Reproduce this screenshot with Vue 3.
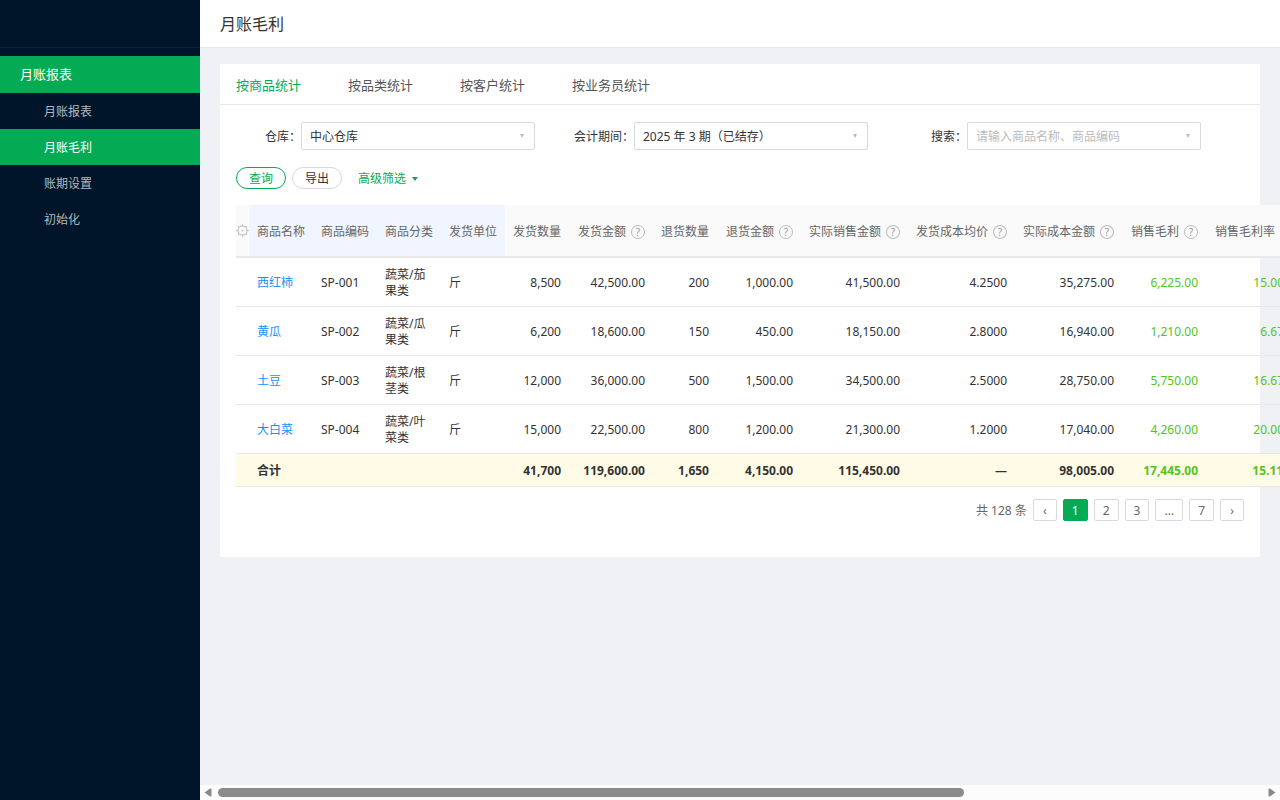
<script setup>
import { ref } from 'vue'

const menus = ['月账报表', '月账毛利', '账期设置', '初始化']
const activeMenu = ref('月账毛利')

const tabs = ['按商品统计', '按品类统计', '按客户统计', '按业务员统计']
const activeTab = ref('按商品统计')

const warehouse = ref('中心仓库')
const period = ref('2025 年 3 期（已结存）')
const keyword = ref('')

const pages = ['‹', '1', '2', '3', '...', '7', '›']
const currentPage = ref('1')

const columns = [
  { key: 'qty', title: '发货数量', size: 'num' },
  { key: 'amount', title: '发货金额', size: 'amount', help: true },
  { key: 'backQty', title: '退货数量', size: 'num' },
  { key: 'backAmount', title: '退货金额', size: 'amount', help: true },
  { key: 'sales', title: '实际销售金额', size: 'wide', help: true },
  { key: 'price', title: '发货成本均价', size: 'wide', help: true },
  { key: 'cost', title: '实际成本金额', size: 'wide', help: true },
  { key: 'profit', title: '销售毛利', size: 'amount', help: true, green: true },
  { key: 'rate', title: '销售毛利率', size: 'rate', help: true, green: true }
]

const rows = [
  { name: '西红柿', code: 'SP-001', category: '蔬菜/茄果类', unit: '斤', qty: '8,500', amount: '42,500.00', backQty: '200', backAmount: '1,000.00', sales: '41,500.00', price: '4.2500', cost: '35,275.00', profit: '6,225.00', rate: '15.00%' },
  { name: '黄瓜', code: 'SP-002', category: '蔬菜/瓜果类', unit: '斤', qty: '6,200', amount: '18,600.00', backQty: '150', backAmount: '450.00', sales: '18,150.00', price: '2.8000', cost: '16,940.00', profit: '1,210.00', rate: '6.67%' },
  { name: '土豆', code: 'SP-003', category: '蔬菜/根茎类', unit: '斤', qty: '12,000', amount: '36,000.00', backQty: '500', backAmount: '1,500.00', sales: '34,500.00', price: '2.5000', cost: '28,750.00', profit: '5,750.00', rate: '16.67%' },
  { name: '大白菜', code: 'SP-004', category: '蔬菜/叶菜类', unit: '斤', qty: '15,000', amount: '22,500.00', backQty: '800', backAmount: '1,200.00', sales: '21,300.00', price: '1.2000', cost: '17,040.00', profit: '4,260.00', rate: '20.00%' }
]

const total = { qty: '41,700', amount: '119,600.00', backQty: '1,650', backAmount: '4,150.00', sales: '115,450.00', price: '—', cost: '98,005.00', profit: '17,445.00', rate: '15.11%' }
</script>

<template>
  <div class="layout">
    <aside class="sidebar">
      <div class="logo"></div>
      <nav class="menu">
        <div class="menu-title">月账报表</div>
        <a
          v-for="m in menus"
          :key="m"
          href="#"
          class="menu-item"
          :class="{ active: m === activeMenu }"
          @click.prevent="activeMenu = m"
        >{{ m }}</a>
      </nav>
    </aside>

    <main class="main">
      <header class="header">
        <h1>月账毛利</h1>
      </header>

      <div class="content">
        <section class="card">
          <div class="tabs">
            <button
              v-for="t in tabs"
              :key="t"
              type="button"
              class="tab"
              :class="{ active: t === activeTab }"
              @click="activeTab = t"
            >{{ t }}</button>
          </div>

          <div class="card-body">
            <div class="filters">
              <div class="field">
                <label for="warehouse">仓库：</label>
                <div class="control">
                  <select id="warehouse" v-model="warehouse">
                    <option>中心仓库</option>
                  </select>
                  <span class="caret"></span>
                </div>
              </div>
              <div class="field">
                <label for="period">会计期间：</label>
                <div class="control">
                  <select id="period" v-model="period">
                    <option>2025 年 3 期（已结存）</option>
                  </select>
                  <span class="caret"></span>
                </div>
              </div>
              <div class="field">
                <label for="keyword">搜索：</label>
                <div class="control">
                  <input id="keyword" v-model="keyword" type="text" placeholder="请输入商品名称、商品编码" />
                  <span class="caret"></span>
                </div>
              </div>
            </div>

            <div class="actions">
              <button type="button" class="btn primary">查询</button>
              <button type="button" class="btn">导出</button>
              <button type="button" class="more">高级筛选<span class="more-caret"></span></button>
            </div>

            <table class="table">
              <colgroup>
                <col class="col-gear" />
                <col v-for="n in 4" :key="n" class="col-num" />
                <col v-for="c in columns" :key="c.key" :class="'col-' + c.size" />
              </colgroup>
              <thead>
                <tr>
                  <th class="gear">
                    <svg viewBox="0 0 12 12" width="13" height="13" fill="none" stroke="#bbb">
                      <circle cx="6" cy="6" r="4.2" />
                      <path d="M6 0.3v1.5M6 10.2v1.5M0.3 6h1.5M10.2 6h1.5M2 2l1 1M9 9l1 1M10 2l-1 1M3 9l-1 1" />
                      <circle cx="6" cy="6" r="0.8" fill="#bbb" stroke="none" />
                    </svg>
                  </th>
                  <th class="fixed">商品名称</th>
                  <th class="fixed">商品编码</th>
                  <th class="fixed">商品分类</th>
                  <th class="fixed">发货单位</th>
                  <th v-for="c in columns" :key="c.key">
                    <div class="th-inner">{{ c.title }}<span v-if="c.help" class="help">?</span></div>
                  </th>
                </tr>
              </thead>
              <tbody>
                <tr v-for="r in rows" :key="r.code">
                  <td></td>
                  <td><a href="#" class="link" @click.prevent>{{ r.name }}</a></td>
                  <td>{{ r.code }}</td>
                  <td>{{ r.category }}</td>
                  <td>{{ r.unit }}</td>
                  <td v-for="c in columns" :key="c.key" class="right" :class="{ green: c.green }">{{ r[c.key] }}</td>
                </tr>
              </tbody>
              <tfoot>
                <tr>
                  <td></td>
                  <td colspan="4">合计</td>
                  <td v-for="c in columns" :key="c.key" class="right" :class="{ green: c.green }">{{ total[c.key] }}</td>
                </tr>
              </tfoot>
            </table>

            <div class="pagination">
              <span class="count">共 128 条</span>
              <button
                v-for="p in pages"
                :key="p"
                type="button"
                class="page"
                :class="{ active: p === currentPage }"
              >{{ p }}</button>
            </div>
          </div>
        </section>
      </div>

      <div class="scrollbar">
        <svg viewBox="0 0 8 9" width="8" height="9"><path d="M0.5 4.5L6 0.6Q7.5 0 7.5 1.5v6Q7.5 9 6 8.4z" fill="#8b8b8b" /></svg>
        <div class="track"><div class="thumb"></div></div>
        <svg viewBox="0 0 8 9" width="8" height="9"><path d="M7.5 4.5L2 0.6Q0.5 0 0.5 1.5v6Q0.5 9 2 8.4z" fill="#8b8b8b" /></svg>
      </div>
    </main>
  </div>
</template>

<style>
body {
  margin: 0;
}
</style>

<style scoped>
.layout {
  display: flex;
  height: 100vh;
  font-family: 'Noto Sans', 'Noto Sans CJK SC', sans-serif;
  font-size: 12px;
  line-height: 16px;
  color: #333;
  background: #f0f1f5;
}

.layout * {
  box-sizing: border-box;
}

button,
input,
select {
  font: inherit;
  color: inherit;
  margin: 0;
}

button {
  cursor: pointer;
}

.sidebar {
  flex: none;
  width: 200px;
  background: #001529;
}

.logo {
  height: 48px;
  border-bottom: 1px solid #102336;
}

.menu {
  padding-top: 8px;
}

.menu-title {
  padding: 0 20px;
  font-size: 13px;
  line-height: 37px;
  color: #fff;
  background: #05ab54;
}

.menu-item {
  display: block;
  padding: 2px 0 0 44px;
  line-height: 34px;
  color: #b3b9bf;
  text-decoration: none;
}

.menu-item.active {
  color: #fff;
  background: #05ab54;
}

.main {
  flex: 1;
  min-width: 0;
  display: flex;
  flex-direction: column;
}

.header {
  flex: none;
  height: 48px;
  padding: 0 20px;
  background: #fff;
  border-bottom: 1px solid #e8e8e8;
}

.header h1 {
  margin: 0;
  font-size: 16px;
  font-weight: 400;
  line-height: 48px;
}

.content {
  flex: 1;
  min-height: 0;
  padding: 16px 20px;
  overflow: auto;
  scrollbar-width: none;
}

.card {
  background: #fff;
  border-radius: 2px;
}

.tabs {
  display: flex;
  gap: 47px;
  padding: 0 16px;
  border-bottom: 1px solid #e8e8e8;
}

.tab {
  padding: 2px 0 0;
  border: none;
  background: none;
  font-size: 13px;
  line-height: 38px;
  color: #555;
}

.tab.active {
  color: #05ab54;
}

.card-body {
  padding: 17px 16px 36px;
}

.filters {
  display: grid;
  grid-template-columns: repeat(3, 1fr);
  margin-right: 9px;
}

.field {
  display: flex;
  align-items: center;
  padding-right: 34px;
}

.field label {
  flex: none;
  width: 65px;
  padding-top: 2px;
  text-align: right;
}

.control {
  flex: 1;
  min-width: 0;
  position: relative;
}

.control select,
.control input {
  display: block;
  width: 100%;
  height: 28px;
  padding: 0 24px 0 8px;
  border: 1px solid #d9d9d9;
  border-radius: 2px;
  background: #fff;
  appearance: none;
  outline: none;
}

.control select {
  padding-top: 2px;
}

.control input::placeholder {
  color: #bbb;
}

.caret {
  position: absolute;
  top: 12px;
  right: 11px;
  border: 2px solid transparent;
  border-top: 4px solid #bbb;
  border-bottom: none;
  pointer-events: none;
}

.actions {
  display: flex;
  gap: 6px;
  margin: 17px 0 16px;
}

.btn {
  width: 50px;
  height: 22px;
  padding: 2px 0 0;
  border: 1px solid #d9d9d9;
  border-radius: 11px;
  background: #fff;
}

.btn.primary {
  border-color: #05ab54;
  color: #05ab54;
}

.more {
  display: flex;
  align-items: center;
  gap: 6px;
  margin-left: 10px;
  padding: 2px 0 0;
  border: none;
  background: none;
  color: #05ab54;
}

.more-caret {
  border: 3px solid transparent;
  border-top: 4px solid #05ab54;
  border-bottom: none;
}

.table {
  width: 830px;
  table-layout: fixed;
  border-collapse: separate;
  border-spacing: 0;
}

.col-gear {
  width: 13px;
}

.col-num {
  width: 64px;
}

.col-amount {
  width: 84px;
}

.col-wide {
  width: 107px;
}

.col-rate {
  width: 96px;
}

.table th {
  height: 53px;
  padding: 2px 8px 0;
  border-bottom: 2px solid #e8e8e8;
  background: #fafafa;
  color: #666;
  font-weight: 400;
  text-align: left;
  white-space: nowrap;
}

.table th.gear {
  padding: 0;
}

.gear svg {
  display: block;
}

.table th.fixed {
  background: #f0f5ff;
}

.table td {
  padding: 9px 8px 7px;
  border-bottom: 1px solid #e8e8e8;
}

.table td:first-child {
  padding: 0;
}

.table td.right {
  text-align: right;
}

.table td.green {
  color: #52c41a;
}

.th-inner {
  display: flex;
  align-items: center;
  justify-content: flex-end;
  gap: 5px;
}

.help {
  width: 14px;
  height: 14px;
  border: 1px solid #bbb;
  border-radius: 50%;
  font-size: 10px;
  line-height: 12px;
  text-align: center;
  color: #999;
}

.link {
  color: #1890ff;
  text-decoration: none;
}

.table tfoot td {
  background: #fffbe6;
  font-weight: 700;
}

.pagination {
  display: flex;
  align-items: center;
  justify-content: flex-end;
  gap: 6px;
  margin-top: 12px;
  color: #666;
}

.count {
  padding-top: 2px;
}

.page {
  min-width: 24px;
  height: 22px;
  padding: 2px 8px 0;
  border: 1px solid #d9d9d9;
  border-radius: 2px;
  background: #fff;
}

.page.active {
  border-color: #05ab54;
  background: #05ab54;
  color: #fff;
}

.scrollbar {
  flex: none;
  display: flex;
  align-items: center;
  gap: 6px;
  height: 15px;
  padding: 0 4px;
  background: #fcfcfc;
}

.track {
  flex: 1;
}

.thumb {
  width: 71.5%;
  height: 9px;
  border-radius: 5px;
  background: #8b8b8b;
}
</style>
